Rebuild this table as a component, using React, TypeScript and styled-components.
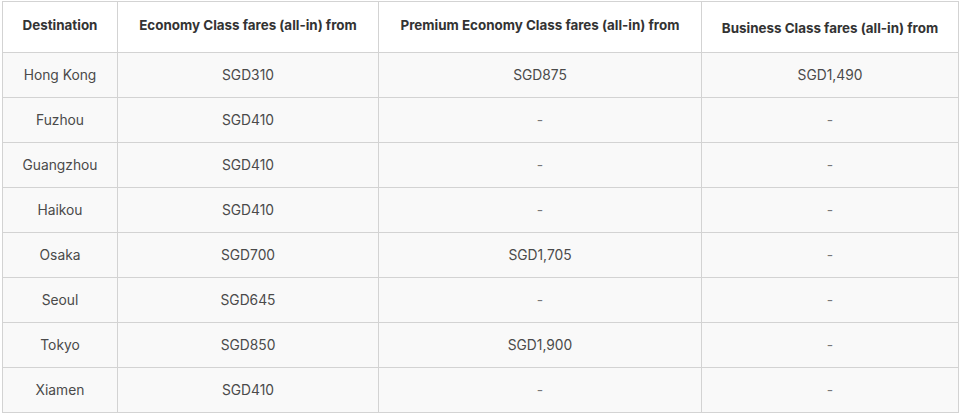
import React from "react";
import styled, { createGlobalStyle } from "styled-components";

const Global = createGlobalStyle`
  html, body { margin: 0; padding: 0; background: #ffffff; }
  body { font-family: Inter, "Liberation Sans", Arial, sans-serif; }
`;

const Wrap = styled.div`
  padding: 1px 4px 0 2px;
`;

const Table = styled.table`
  border-collapse: collapse;
  table-layout: fixed;
  width: 957px;
  border: 1px solid #d3d3d3;
`;

const HeadCell = styled.th<{ $pt: number }>`
  height: 51px;
  box-sizing: border-box;
  padding: ${(p) => p.$pt}px 4px 0;
  vertical-align: top;
  border: 1px solid #d3d3d3;
  background: #ffffff;
  color: #333333;
  font-size: 13.4px;
  font-weight: 700;
  line-height: 20px;
  text-align: center;
`;

const Cell = styled.td<{ $dash?: boolean }>`
  height: 45px;
  box-sizing: border-box;
  padding: 0 4px;
  border: 1px solid #d3d3d3;
  background: #f9f9f9;
  color: ${(p) => (p.$dash ? "#777777" : "#4a4a4a")};
  font-size: 13.8px;
  line-height: 20px;
  text-align: center;
  vertical-align: middle;
`;

const headers = [
  { label: "Destination", pt: 13, w: 115 },
  { label: "Economy Class fares (all-in) from", pt: 13, w: 261 },
  { label: "Premium Economy Class fares (all-in) from", pt: 13, w: 323 },
  { label: "Business Class fares (all-in) from", pt: 16, w: 257 },
];

const rows: string[][] = [
  ["Hong Kong", "SGD310", "SGD875", "SGD1,490"],
  ["Fuzhou", "SGD410", "-", "-"],
  ["Guangzhou", "SGD410", "-", "-"],
  ["Haikou", "SGD410", "-", "-"],
  ["Osaka", "SGD700", "SGD1,705", "-"],
  ["Seoul", "SGD645", "-", "-"],
  ["Tokyo", "SGD850", "SGD1,900", "-"],
  ["Xiamen", "SGD410", "-", "-"],
];

export default function App() {
  return (
    <>
      <Global />
      <Wrap>
        <Table>
          <colgroup>
            {headers.map((h) => (
              <col key={h.label} style={{ width: h.w }} />
            ))}
          </colgroup>
          <thead>
            <tr>
              {headers.map((h) => (
                <HeadCell key={h.label} $pt={h.pt}>
                  {h.label}
                </HeadCell>
              ))}
            </tr>
          </thead>
          <tbody>
            {rows.map((r) => (
              <tr key={r[0]}>
                {r.map((c, i) => (
                  <Cell key={i} $dash={c === "-"}>
                    {c}
                  </Cell>
                ))}
              </tr>
            ))}
          </tbody>
        </Table>
      </Wrap>
    </>
  );
}
